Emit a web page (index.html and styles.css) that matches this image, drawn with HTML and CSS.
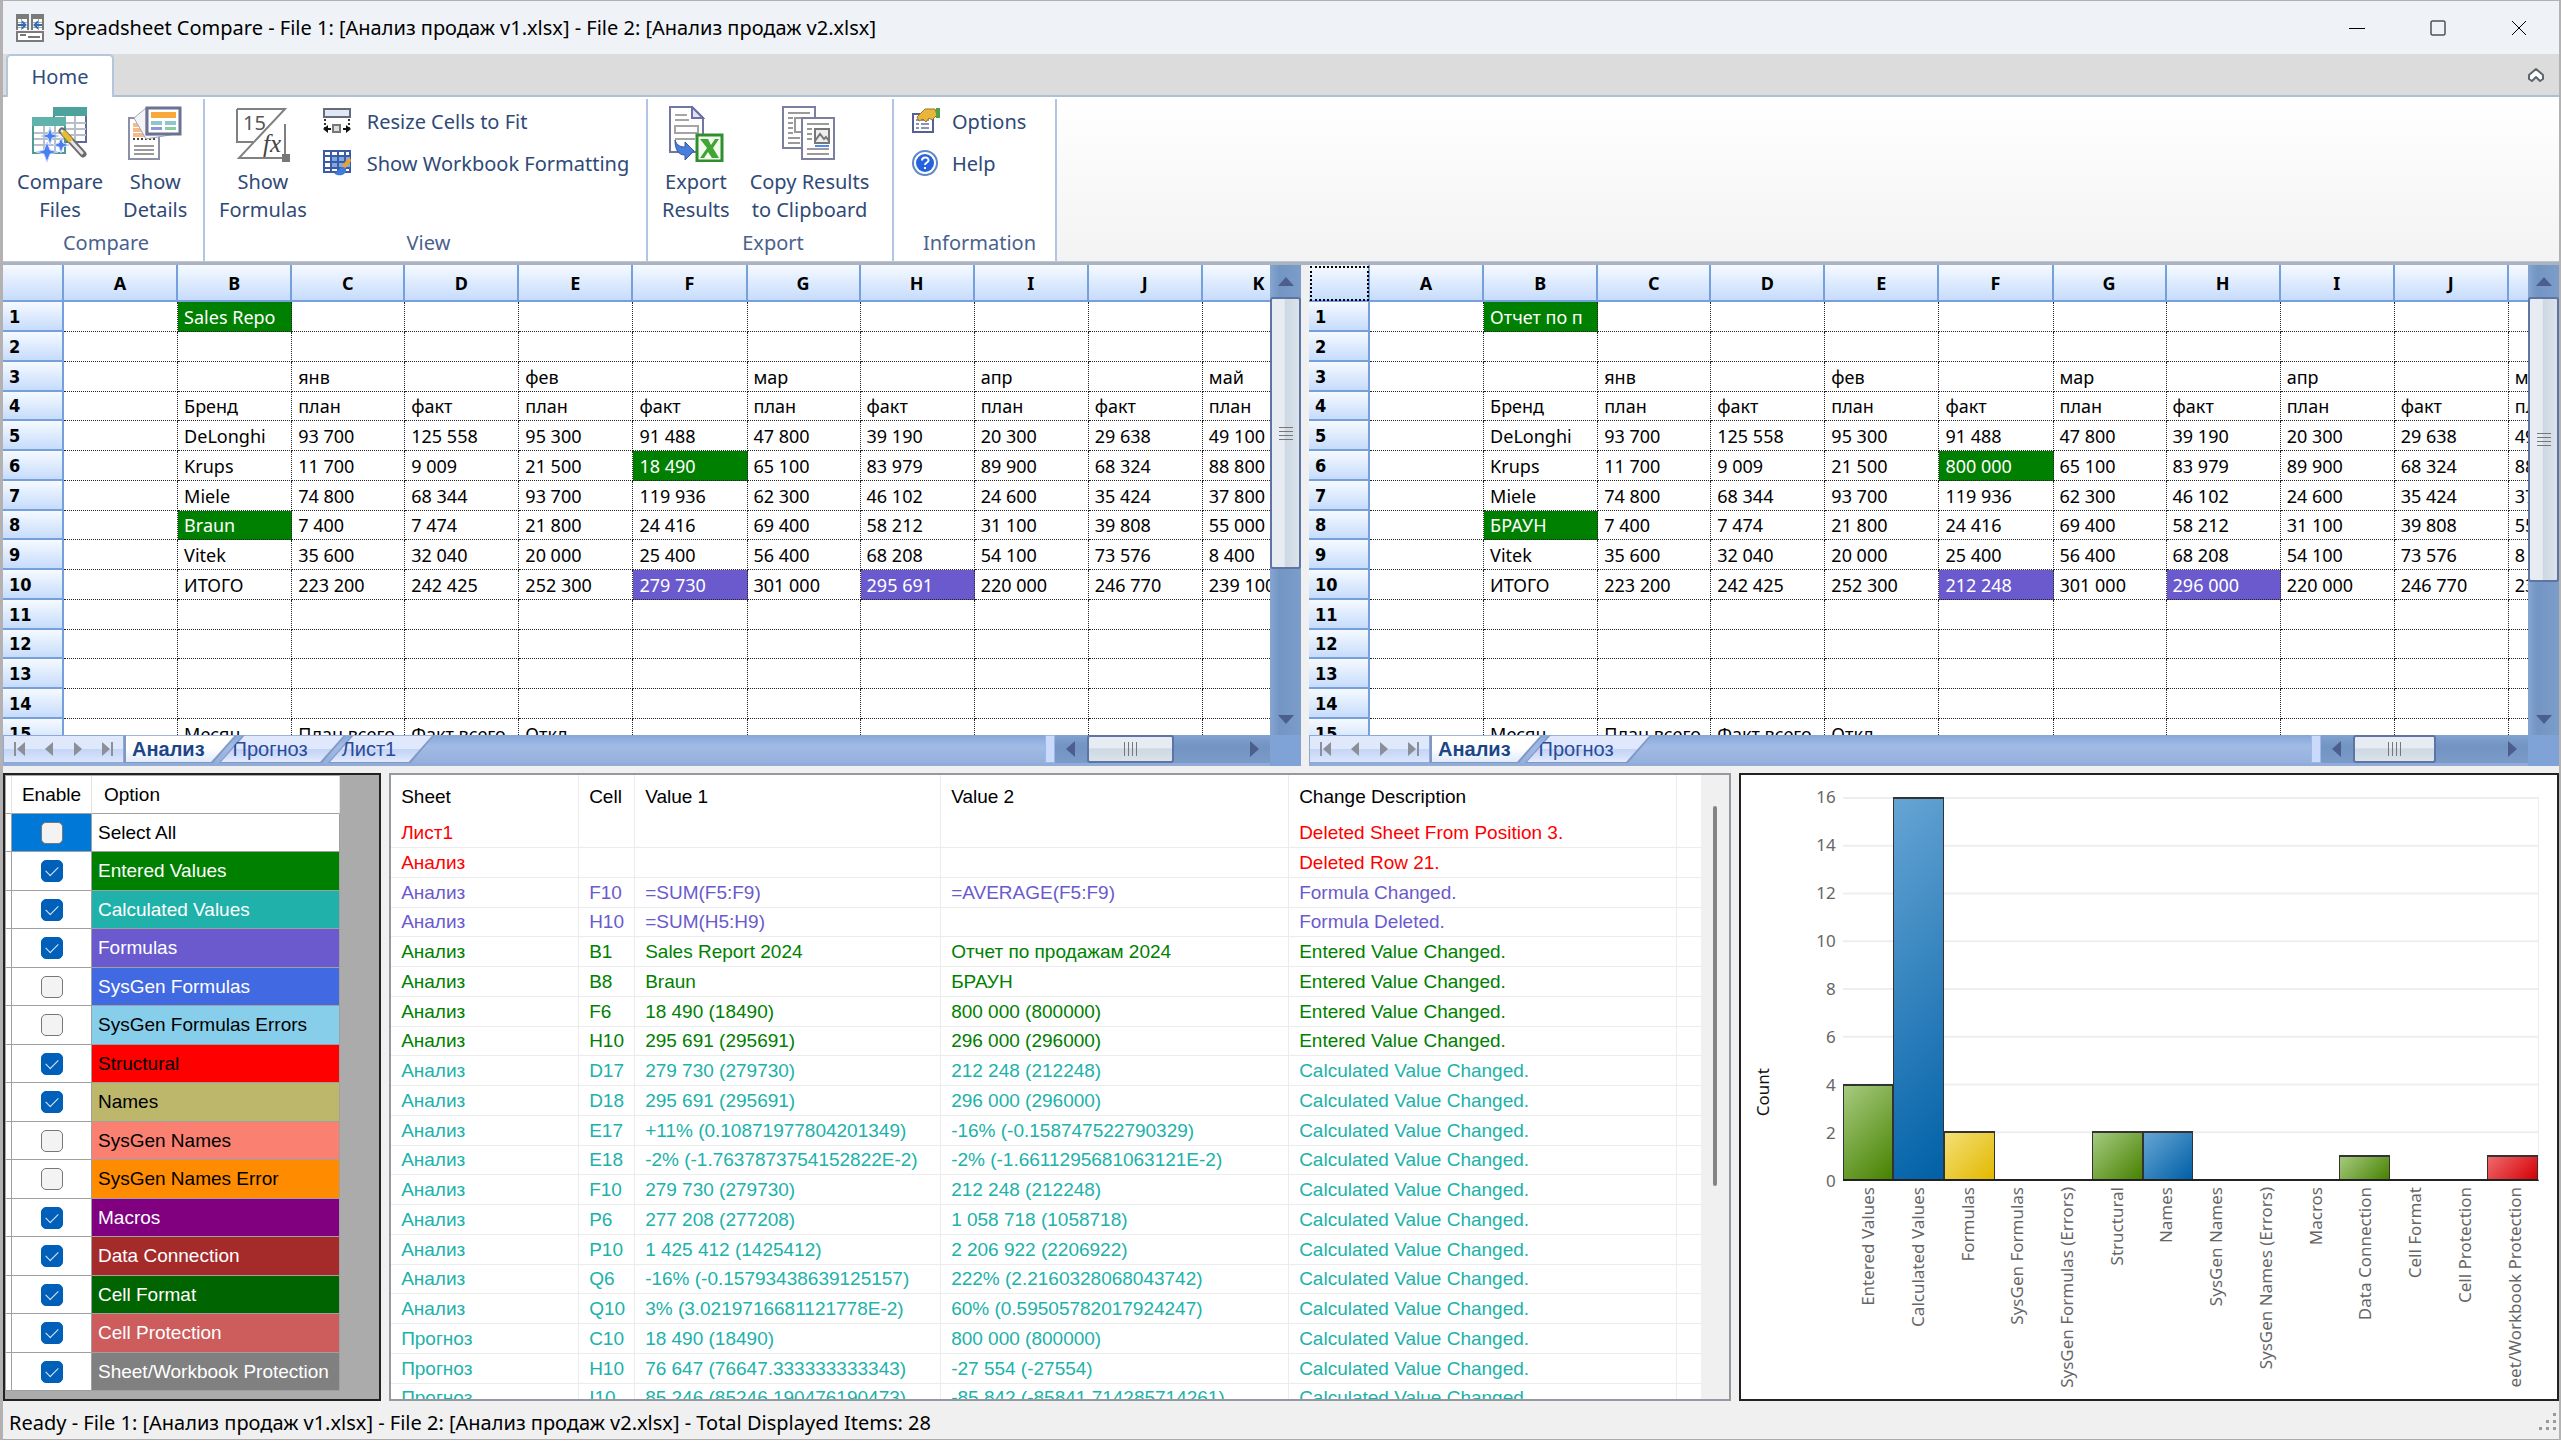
FILE: index.html
```html
<!DOCTYPE html>
<html lang="en">
<head>
  <meta charset="UTF-8">
  <title>Spreadsheet Compare</title>
  <link rel="stylesheet" href="styles.css">
</head>
<body>

<header class="titlebar">
  <svg class="app-icon" width="28" height="28" viewBox="0 0 28 28">
    <path fill="#7b7b7b" d="M0 0h13v16H0zM15 0h13v16H15zM0 17h28v11H0z"/>
    <path fill="#fff" d="M2 5h9v11H2zM17 5h9v11h-9zM2 19h24v7H2z"/>
    <path stroke="#aaa" fill="none" d="M2 8.500h9M2 13.500h9M5.500 5v11M17 8.500h9M17 13.500h9M22.500 5v11"/>
    <path stroke="#2f6eb5" stroke-width="2" fill="none" d="M2 11h7M6 7.500l3.500 3.500L6 14.500M26 11h-7M22 7.500L18.500 11l3.500 3.500"/>
    <path stroke="#777" stroke-width="2" fill="none" d="M4 21h6M12 23h12"/>
  </svg>
  <h1>Spreadsheet Compare - File 1: [Анализ продаж v1.xlsx] - File 2: [Анализ продаж v2.xlsx]</h1>
  <div class="window-buttons">
    <button aria-label="Minimize"><svg width="16" height="16" viewBox="0 0 16 16"><path d="M0 8.500h16"/></svg></button>
    <button aria-label="Maximize"><svg width="16" height="16" viewBox="0 0 16 16"><rect x="1" y="1" width="14" height="14" rx="1"/></svg></button>
    <button aria-label="Close"><svg width="16" height="16" viewBox="0 0 16 16"><path d="M1 1l14 14M15 1L1 15"/></svg></button>
  </div>
</header>

<nav class="tabstrip">
  <button class="ribbon-tab">Home</button>
  <button class="collapse" aria-label="Collapse ribbon">
    <svg width="18" height="16" viewBox="0 0 18 16"><path fill="#fff" stroke="#5c6670" stroke-width="2" stroke-linejoin="round" d="M9 2L2 8v4l3 2 4-4 4 4 3-2V8z"/></svg>
  </button>
</nav>

<section class="ribbon">
  <div class="group group-compare">
    <div class="items">
      <button class="big">
        <svg width="56" height="56" viewBox="0 0 56 56">
          <path fill="#fff" stroke="#5d6b9a" stroke-width="2" d="M22 2h32v34H22z"/>
          <path fill="#4da39b" d="M21 1h34v9H21z"/>
          <path stroke="#b9bfc9" stroke-width="2" fill="none" d="M33 10v26M43 10v26M22 17h32M22 23h32M22 29h32"/>
          <path fill="#fff" stroke="#4f9a94" stroke-width="2" d="M1 12h32v35H1z"/>
          <path fill="#5fb3aa" d="M0 11h34v9H0z"/>
          <path stroke="#b9bfc9" stroke-width="2" fill="none" d="M12 20v26M23 20v26M2 27h30M2 33h30M2 39h30"/>
          <path stroke="#6c6c6c" stroke-width="7" stroke-linecap="round" d="M30 25l21 23"/>
          <path stroke="#e6e6e6" stroke-width="3" stroke-linecap="round" d="M30 25l20 22"/>
          <path stroke="#e8be2c" stroke-width="5" d="M31 26l8 9"/>
          <path fill="#4b7ff0" stroke="#c5d8ff" d="M18 21l2 7 7 2-7 2-2 7-2-7-7-2 7-2zM29 31l2 6 6 2-6 2-2 6-2-6-6-2 6-2zM15 36l3 8 8 2-8 2-3 8-3-8-8-2 8-2z"/>
        </svg>
        <span>Compare<br>Files</span>
      </button>
      <button class="big">
        <svg width="56" height="56" viewBox="0 0 56 56">
          <path fill="#fff" stroke="#8c8fa8" stroke-width="2" d="M2 12h30v41H2z"/>
          <path fill="#f6b98a" d="M6 17h12v14H6z"/>
          <path stroke="#fff" d="M6 21.500h12M6 26.500h12"/>
          <path stroke="#9a9a9a" stroke-width="2" fill="none" d="M7 40h20M7 44h20M7 48h20"/>
          <path stroke="#444" stroke-width="2" stroke-dasharray="2 2" fill="none" d="M6 33h24M20 14v18"/>
          <path fill="#f4f4f8" stroke="#a4a4b4" d="M7 12L19 2v27l30-1-30 5z"/>
          <path fill="#fff" stroke="#6d7193" stroke-width="3" d="M20 2h33v26H20z"/>
          <path fill="#f9a83a" d="M24 6h25v6H24z"/>
          <path fill="#8fc5cf" d="M24 15h11v4H24zM38 15h11v4H38z"/>
          <path fill="#8d97dc" d="M24 21h11v3H24z"/>
          <path fill="#88cfa0" d="M38 21h11v3H38z"/>
        </svg>
        <span>Show<br>Details</span>
      </button>
    </div>
    <div class="group-name">Compare</div>
  </div>

  <div class="group group-view">
    <div class="items">
      <button class="big">
        <svg width="56" height="56" viewBox="0 0 56 56">
          <path fill="#fff" stroke="#808080" stroke-width="2" d="M2 3h48L4 52h46V18M2 3v33h16"/>
          <path fill="#777" d="M47 48h8v8h-8z"/>
          <text x="8" y="24" font-family="Noto Sans" font-size="20" fill="#555">15</text>
          <text x="28" y="46" font-family="Liberation Serif" font-style="italic" font-size="25" fill="#444">fx</text>
        </svg>
        <span>Show<br>Formulas</span>
      </button>
      <div class="stack">
        <button class="small">
          <svg width="28" height="26" viewBox="0 0 28 26">
            <path fill="#dfe8f4" stroke="#666c7a" stroke-width="2" d="M1 1h26v8H1z"/>
            <path stroke="#333" stroke-width="2" stroke-dasharray="2 2" fill="none" d="M2 11v9M26 11v9"/>
            <path fill="#ddd" stroke="#777" stroke-width="2" d="M10 17h7v7h-7z"/>
            <path fill="#111" d="M0 21l5-4v3h3v2H5v3zM28 21l-5-4v3h-3v2h3v3z"/>
          </svg>
          <span>Resize Cells to Fit</span>
        </button>
        <button class="small">
          <svg width="28" height="26" viewBox="0 0 28 26">
            <path fill="#fff" stroke="#3c5aa6" stroke-width="2" d="M1 1h26v21H1z"/>
            <path fill="#7fa9e4" d="M8 6h19v13H8z"/>
            <path stroke="#3c5aa6" stroke-width="2" fill="none" d="M8 1v21M15 1v21M22 1v21M1 6h26M1 12h26M1 18h26"/>
            <path stroke="#e5a52e" stroke-width="4" d="M27 9l-7 9"/>
            <path fill="#3d7be0" d="M21 17c-5-1-5 5-10 6 3 4 13 3 12-4z"/>
          </svg>
          <span>Show Workbook Formatting</span>
        </button>
      </div>
    </div>
    <div class="group-name">View</div>
  </div>

  <div class="group group-export">
    <div class="items">
      <button class="big">
        <svg width="56" height="56" viewBox="0 0 56 56">
          <path fill="#fff" stroke="#74779c" stroke-width="2" d="M2 1h22l11 11v34H2z"/>
          <path fill="#dfe4f2" stroke="#6b6fa6" stroke-width="2" d="M24 1v11h11z"/>
          <path stroke="#a5a5a5" stroke-width="2" fill="none" d="M7 9h12M7 14h14M7 20h23v7H7zM7 33h20"/>
          <path fill="#4a7ddc" stroke="#2f56a8" d="M7 34c2 6 6 7 10 7v-5l9 9-9 9v-5c-7 0-10-6-10-15z"/>
          <path fill="#f2faee" stroke="#2f8f2f" stroke-width="3" d="M29 29h25v26H29z"/>
          <path fill="#3fa535" d="M32 33h8l3 6 4-6h4l-6 9 6 10h-7l-4-6-4 6h-4l7-10z"/>
        </svg>
        <span>Export<br>Results</span>
      </button>
      <button class="big">
        <svg width="56" height="56" viewBox="0 0 56 56">
          <path fill="#fff" stroke="#7c7fa0" stroke-width="2" d="M2 1h32v41H2z"/>
          <path stroke="#9a9a9a" stroke-width="2" fill="none" d="M7 7h22M7 12h5M7 17h5M7 22h5M7 27h5M7 32h12M7 37h12M14 12h16v14H14z"/>
          <path fill="#fff" stroke="#7c7fa0" stroke-width="2" d="M21 12h32v41H21z"/>
          <path stroke="#9a9a9a" stroke-width="2" fill="none" d="M26 18h22M26 23h5M26 28h5M26 33h5M26 43h22M26 48h22"/>
          <path fill="#eee" stroke="#777" stroke-width="2" d="M34 23h14v14H34zM34 35l5-7 4 5 2-2 3 4"/>
          <path stroke="#4a8cf0" stroke-width="2" d="M34 40h14"/>
        </svg>
        <span>Copy Results<br>to Clipboard</span>
      </button>
    </div>
    <div class="group-name">Export</div>
  </div>

  <div class="group group-info">
    <div class="items">
      <div class="stack">
        <button class="small">
          <svg width="28" height="26" viewBox="0 0 28 26">
            <path fill="#fff" stroke="#565f96" stroke-width="2" d="M1 6h20v18H1z"/>
            <path stroke="#8a93b8" stroke-width="2" stroke-dasharray="3 2 8 9" fill="none" d="M4 12h14M4 16h14M4 20h14"/>
            <path fill="#e8b63c" stroke="#9a7420" d="M5 9l8-8h10l2 6-5 5-3-2-3 4-3-3-4 2z"/>
            <path fill="#4fa04a" d="M24 0h4v10h-4z"/>
          </svg>
          <span>Options</span>
        </button>
        <button class="small">
          <svg width="28" height="26" viewBox="0 0 28 26">
            <circle cx="13" cy="13" r="12" fill="#fff" stroke="#5f86c8" stroke-width="2"/>
            <circle cx="13" cy="13" r="9" fill="#2463dd"/>
            <path fill="none" stroke="#fff" stroke-width="2" d="M10 10.500c0-4 7-4 6.500 0 0 2-3.500 2-3.500 4.500M13 17v2"/>
          </svg>
          <span>Help</span>
        </button>
      </div>
    </div>
    <div class="group-name">Information</div>
  </div>
</section>

<main class="workspace">
  <section class="sheets">
    <div class="sheet" id="sheet1"></div>
    <div class="sheet" id="sheet2"></div>
  </section>

  <section class="results">
    <div class="options">
      <table>
        <thead><tr><th class="selector"></th><th class="enable">Enable</th><th>Option</th></tr></thead>
        <tbody id="options"></tbody>
      </table>
    </div>

    <div class="details">
      <table>
        <colgroup><col class="c-sheet"><col class="c-cell"><col class="c-v1"><col class="c-v2"><col class="c-desc"><col></colgroup>
        <thead><tr><th>Sheet</th><th>Cell</th><th>Value 1</th><th>Value 2</th><th>Change Description</th><th></th></tr></thead>
        <tbody id="details"></tbody>
      </table>
      <div class="details-scroll"><span></span></div>
    </div>

    <div class="chart">
      <div class="axis-title"><span>Count</span></div>
      <div class="y-axis">
        <span>16</span><span>14</span><span>12</span><span>10</span><span>8</span><span>6</span><span>4</span><span>2</span><span>0</span>
      </div>
      <div class="plot" id="plot"></div>
      <div class="x-axis" id="xAxis"></div>
    </div>
  </section>
</main>

<footer class="statusbar">
  <span>Ready - File 1: [Анализ продаж v1.xlsx] - File 2: [Анализ продаж v2.xlsx] - Total Displayed Items: 28</span>
  <svg width="18" height="20" viewBox="0 0 18 20"><path fill="#999" d="M14 1h3v3h-3zM14 8h3v3h-3zM7 8h3v3H7zM14 15h3v3h-3zM7 15h3v3H7zM0 15h3v3H0z"/></svg>
</footer>

<script src="app.js"></script>
</body>
</html>
```
FILE: styles.css
```css
* {
  box-sizing: border-box;
}

body {
  display: flex;
  flex-direction: column;
  height: 100vh;
  margin: 0;
  padding: 1px 2px 0 3px;
  overflow: hidden;
  background: #b3b1b1;
  font-family: "Noto Sans", "Open Sans", sans-serif;
  font-size: 18px;
  color: #000;
}

button {
  padding: 0;
  border: none;
  background: none;
  font: inherit;
  color: inherit;
}

svg {
  display: block;
  flex: none;
}

table {
  border-spacing: 0;
  table-layout: fixed;
}

/* title bar */
.titlebar {
  display: flex;
  align-items: center;
  flex: 0 0 53px;
  padding-left: 13px;
  background: #eff3f7;
}

.titlebar h1 {
  flex: 1;
  margin: 0 0 0 10px;
  font-size: 20px;
  font-weight: 400;
}

.window-buttons {
  display: flex;
}

.window-buttons button {
  display: flex;
  justify-content: center;
  width: 81px;
}

.window-buttons path,
.window-buttons rect {
  fill: none;
  stroke: #000;
}

/* ribbon */
.tabstrip {
  display: flex;
  justify-content: space-between;
  flex: 0 0 41px;
  padding: 0 14px 0 3px;
  background: #dcdcdc;
}

.ribbon-tab {
  width: 108px;
  margin-bottom: -2px;
  border: 2px solid #b3c6dc;
  border-bottom: none;
  border-radius: 5px 5px 0 0;
  background: #fff;
  font-size: 20px;
  color: #2f4c7c;
  z-index: 1;
}

.ribbon {
  display: flex;
  flex: 0 0 167px;
  border-top: 2px solid #b0c0d4;
  border-bottom: 1px solid #b9c7da;
  background: linear-gradient(#fff, #f3f3f3);
  font-size: 20px;
  color: #2f4a76;
}

.group {
  display: flex;
  flex-direction: column;
  justify-content: space-between;
  margin-top: 2px;
  padding: 7px 8px 4px 14px;
  border-right: 2px solid #b2c5e4;
  background: #fff;
}

.group-compare { width: 202px; }
.group-view { width: 443px; }
.group-export { width: 246px; }
.group-info { width: 163px; padding-left: 18px; }

.items {
  display: flex;
  align-items: flex-start;
  gap: 20px;
}

.group-view .items {
  gap: 16px;
}

.big {
  display: flex;
  flex-direction: column;
  align-items: center;
  gap: 6px;
  line-height: 28px;
}

.stack {
  display: flex;
  flex-direction: column;
  margin-top: -6px;
}

.small {
  display: flex;
  align-items: center;
  gap: 16px;
  height: 42px;
  white-space: nowrap;
}

.group-info .small {
  gap: 12px;
}

.group-name {
  text-align: center;
  line-height: 28px;
  color: #4a628c;
}

/* workspace */
.workspace {
  display: flex;
  flex-direction: column;
  flex: 1;
  gap: 7px;
  min-height: 0;
  border-top: 3px solid #adb3bd;
  background: #f0f0f0;
}

.sheets {
  display: grid;
  grid-template-columns: 1298fr 1250fr;
  grid-template-rows: minmax(0, 1fr);
  gap: 8px;
  flex: 501 1 0;
  min-height: 0;
}

.sheet {
  display: grid;
  grid-template-columns: minmax(0, 1fr) 31px;
  grid-template-rows: minmax(0, 1fr) 31px;
  min-height: 0;
}

.grid-view {
  overflow: hidden;
  background: #fff;
}

.grid-view table {
  width: 1313px;
}

.grid-view col { width: 114px; }
.grid-view col:nth-child(4n) { width: 113px; }
.grid-view col:first-child { width: 61px; }

.grid-view tr { height: 30px; }
.grid-view tbody tr:nth-child(4n) { height: 29px; }
.grid-view thead tr { height: 37px; }

.grid-view th {
  padding: 0;
  border: solid #75a0dc;
  border-width: 0 2px 2px 0;
  background: linear-gradient(#f6faff, #c6dcfc);
}

.grid-view tbody th {
  padding-left: 6px;
  text-align: left;
  font-family: "DejaVu Sans Condensed", "DejaVu Sans", sans-serif;
}

.grid-view td {
  padding: 0 0 0 6px;
  border: dotted #222;
  border-width: 0 1px 1px 0;
  line-height: 24px;
  white-space: nowrap;
  overflow: hidden;
}

#sheet2 thead th:first-child {
  outline: 2px dotted #000;
  outline-offset: -3px;
}

.grid-view .entered { background: green; color: #fff; }
.grid-view .formula { background: slateblue; color: #fff; }

.vscroll {
  display: flex;
  flex-direction: column;
  background: linear-gradient(90deg, #86a6d2, #7395c3 30%, #7c9dca);
}

.vscroll button,
.hscroll button {
  display: flex;
  align-items: center;
  justify-content: center;
  flex: 0 0 32px;
}

.track {
  display: flex;
  flex: 1;
}

.vscroll .track {
  flex-direction: column;
}

.thumb {
  display: flex;
  align-items: center;
  justify-content: center;
  border: 2px solid #5d74a4;
  border-radius: 3px;
  background: linear-gradient(90deg, #e6ecf2 45%, #cdd8e3 50%, #dbe3ea);
}

.hscroll .thumb {
  background: linear-gradient(#e6ecf2 45%, #cdd8e3 50%, #dbe3ea);
}

.sheetbar {
  display: flex;
  border-bottom: 3px solid #92acd8;
  background: linear-gradient(#86a6d8, #a1bbe6 40%, #94b0dc);
}

.sheet-nav {
  display: flex;
  justify-content: space-around;
  align-items: center;
  width: 121px;
  border: 1px solid #8ba8d8;
  background: linear-gradient(#e0e9fc 50%, #c3d4f7 50%, #dce6fb);
}

.sheet-tab {
  position: relative;
  z-index: 1;
  margin-left: -18px;
  padding: 0 38px 0 14px;
  background: #8298c4;
  clip-path: polygon(24px 0, 100% 0, calc(100% - 24px) 100%, 0 100%);
  font-family: "Liberation Sans", Arial, sans-serif;
  font-size: 20px;
  color: #2a4a98;
}

.sheet-tab::before {
  content: "";
  position: absolute;
  inset: 0 2px 1px 2px;
  z-index: -1;
  background: linear-gradient(#dfe8fc 50%, #bfd1f6 50%, #e2eafc);
  clip-path: inherit;
}

.sheet-tab.active {
  margin-left: 0;
  padding: 0 32px 0 8px;
  clip-path: polygon(0 0, 100% 0, calc(100% - 24px) 100%, 0 100%);
  font-weight: 700;
  color: #1c4688;
}

.sheet-tab.active::before {
  background: linear-gradient(#fff 50%, #dfeafb);
}

.splitter {
  width: 10px;
  margin-left: auto;
  border: 1px solid #9db7e6;
  background: #cbdafa;
}

.hscroll {
  display: flex;
  width: 17%;
  background: linear-gradient(#82a2d0, #7294c2 40%, #7b9bc8);
}

.hscroll .thumb {
  width: 58%;
}

.corner {
  background: #7fa3d6;
}

/* lower panels */
.results {
  display: grid;
  grid-template-columns: 378fr 1341fr 820fr;
  grid-template-rows: minmax(0, 1fr);
  gap: 8px;
  flex: 627 1 0;
  min-height: 0;
  font-family: "Liberation Sans", Arial, sans-serif;
  font-size: 19px;
}

.options {
  padding: 1px 0 0 1px;
  border: 2px solid #222;
  background: #ababab;
  overflow: hidden;
}

.options table {
  width: 334px;
  background: #fff;
}

.options th,
.options td {
  padding: 0;
  border: solid #a0a0a0;
  border-width: 0 1px 1px 0;
}

.options th {
  height: 38px;
  padding-left: 12px;
  border-right-color: #e5e5e5;
  text-align: left;
  font-weight: 400;
}

.options .selector {
  width: 6px;
  padding: 0;
}

.options .enable {
  width: 80px;
  padding: 0;
  text-align: center;
}

.options tbody tr { height: 38px; }
.options tbody tr:nth-child(2n) { height: 39px; }

.options tbody tr:first-child .enable {
  background: #0078d7;
}

.options label {
  display: block;
  padding-left: 6px;
  white-space: nowrap;
}

.options input {
  display: block;
  appearance: none;
  width: 22px;
  height: 22px;
  margin: 0 auto;
  border: 1px solid #777;
  border-radius: 5px;
  background: #f3f3f3;
}

.options input:checked {
  border-color: #005fb8;
  background: #005fb8;
}

.options input:checked::before {
  content: "";
  display: block;
  width: 11px;
  height: 6px;
  margin: 5px auto;
  border: solid #dce9f6;
  border-width: 0 0 1px 1px;
  transform: rotate(-45deg);
}

.details {
  display: flex;
  min-width: 0;
  border: 2px solid #9499a0;
  background: #fff;
  overflow: hidden;
}

.details table {
  flex: 1;
  align-self: flex-start;
}

.c-sheet { width: 188px; }
.c-cell { width: 56px; }
.c-v1 { width: 306px; }
.c-v2 { width: 348px; }
.c-desc { width: 388px; }

.details th,
.details td {
  padding: 0 0 0 10px;
  border-right: 1px solid #ececec;
  text-align: left;
  font-weight: 400;
  white-space: nowrap;
}

.details td {
  border-bottom: 1px solid #ececec;
  line-height: 24px;
}

.details th:last-child,
.details td:last-child {
  border-right: none;
}

.details thead tr { height: 43px; }
.details tbody tr { height: 30px; }
.details tbody tr:nth-child(4n) { height: 29px; }

.details .structural { color: red; }
.details .formulas { color: slateblue; }
.details .entered { color: green; }
.details .calculated { color: lightseagreen; }

.details-scroll {
  width: 28px;
  padding: 31px 0 0 12px;
  background: #f0f0f0;
}

.details-scroll span {
  display: block;
  width: 4px;
  height: 64%;
  border-radius: 2px;
  background: #858585;
}

/* chart */
.chart {
  display: grid;
  grid-template-columns: 44px 58px minmax(0, 1fr);
  grid-template-rows: minmax(0, 1fr) 200px;
  gap: 6px 0;
  min-width: 0;
  padding: 22px 18px 12px 0;
  border: 2px solid #222;
  background: #fff;
  font-family: "Noto Sans", sans-serif;
  font-size: 17px;
  color: #666;
}

.axis-title {
  grid-row: 1 / 3;
  display: flex;
  align-items: center;
  justify-content: center;
  color: #111;
}

.axis-title span,
.x-axis span {
  writing-mode: vertical-rl;
  transform: rotate(180deg);
  white-space: nowrap;
}

.y-axis {
  display: flex;
  flex-direction: column;
  justify-content: space-between;
  margin: -12px 0;
  padding-right: 7px;
  text-align: right;
  line-height: 24px;
}

.plot {
  display: flex;
  align-items: flex-end;
  border-right: 1px solid #eee;
  border-bottom: 2px solid #222;
  background: linear-gradient(#eee 2px, transparent 2px) 0 0 / 100% 12.5%;
}

.bar {
  flex: 1;
  border: 1px solid #333;
  border-top-width: 2px;
  border-bottom: none;
}

.bar.empty { border: none; }
.bar.green { background: linear-gradient(135deg, #a6ca7f, #478201); }
.bar.blue { background: linear-gradient(135deg, #66a5d4, #0060a7); }
.bar.yellow { background: linear-gradient(135deg, #f4df76, #e2b900); }
.bar.red { background: linear-gradient(135deg, #ee6a6d, #d50005); }

.x-axis {
  grid-column: 3;
  display: flex;
  align-items: flex-start;
  overflow: hidden;
}

.x-axis div {
  display: flex;
  justify-content: center;
  flex: 1;
}

/* status bar */
.statusbar {
  display: flex;
  align-items: center;
  justify-content: space-between;
  flex: 0 0 39px;
  padding: 4px 2px 0 6px;
  border-bottom: 1px solid #aaa;
  background: #f0f0f0;
  font-size: 20px;
}
```
FILE: app.js
```js
const COLUMNS = ['A', 'B', 'C', 'D', 'E', 'F', 'G', 'H', 'I', 'J', 'K'];

const ROWS = {
  1: ['', 'Sales Repo'],
  3: ['', '', 'янв', '', 'фев', '', 'мар', '', 'апр', '', 'май'],
  4: ['', 'Бренд', 'план', 'факт', 'план', 'факт', 'план', 'факт', 'план', 'факт', 'план'],
  5: ['', 'DeLonghi', '93 700', '125 558', '95 300', '91 488', '47 800', '39 190', '20 300', '29 638', '49 100'],
  6: ['', 'Krups', '11 700', '9 009', '21 500', '18 490', '65 100', '83 979', '89 900', '68 324', '88 800'],
  7: ['', 'Miele', '74 800', '68 344', '93 700', '119 936', '62 300', '46 102', '24 600', '35 424', '37 800'],
  8: ['', 'Braun', '7 400', '7 474', '21 800', '24 416', '69 400', '58 212', '31 100', '39 808', '55 000'],
  9: ['', 'Vitek', '35 600', '32 040', '20 000', '25 400', '56 400', '68 208', '54 100', '73 576', '8 400'],
  10: ['', 'ИТОГО', '223 200', '242 425', '252 300', '279 730', '301 000', '295 691', '220 000', '246 770', '239 100'],
  15: ['', 'Месяц', 'План всего', 'Факт всего', 'Откл.']
};

const MARKS = { B1: 'entered', F6: 'entered', B8: 'entered', F10: 'formula', H10: 'formula' };

const OPTIONS = [
  ['Select All', false, '#fff', '#000'],
  ['Entered Values', true, 'green', '#fff'],
  ['Calculated Values', true, 'lightseagreen', '#fff'],
  ['Formulas', true, 'slateblue', '#fff'],
  ['SysGen Formulas', false, 'royalblue', '#fff'],
  ['SysGen Formulas Errors', false, 'skyblue', '#000'],
  ['Structural', true, 'red', '#000'],
  ['Names', true, 'darkkhaki', '#000'],
  ['SysGen Names', false, 'salmon', '#000'],
  ['SysGen Names Error', false, 'darkorange', '#000'],
  ['Macros', true, 'purple', '#fff'],
  ['Data Connection', true, 'brown', '#fff'],
  ['Cell Format', true, 'darkgreen', '#fff'],
  ['Cell Protection', true, 'indianred', '#fff'],
  ['Sheet/Workbook Protection', true, 'gray', '#fff']
];

const CALC = 'Calculated Value Changed.';
const ENTERED = 'Entered Value Changed.';

const DETAILS = [
  ['structural', 'Лист1', '', '', '', 'Deleted Sheet From Position 3.'],
  ['structural', 'Анализ', '', '', '', 'Deleted Row 21.'],
  ['formulas', 'Анализ', 'F10', '=SUM(F5:F9)', '=AVERAGE(F5:F9)', 'Formula Changed.'],
  ['formulas', 'Анализ', 'H10', '=SUM(H5:H9)', '', 'Formula Deleted.'],
  ['entered', 'Анализ', 'B1', 'Sales Report 2024', 'Отчет по продажам 2024', ENTERED],
  ['entered', 'Анализ', 'B8', 'Braun', 'БРАУН', ENTERED],
  ['entered', 'Анализ', 'F6', '18 490 (18490)', '800 000 (800000)', ENTERED],
  ['entered', 'Анализ', 'H10', '295 691 (295691)', '296 000 (296000)', ENTERED],
  ['calculated', 'Анализ', 'D17', '279 730 (279730)', '212 248 (212248)', CALC],
  ['calculated', 'Анализ', 'D18', '295 691 (295691)', '296 000 (296000)', CALC],
  ['calculated', 'Анализ', 'E17', '+11% (0.10871977804201349)', '-16% (-0.158747522790329)', CALC],
  ['calculated', 'Анализ', 'E18', '-2% (-1.7637873754152822E-2)', '-2% (-1.6611295681063121E-2)', CALC],
  ['calculated', 'Анализ', 'F10', '279 730 (279730)', '212 248 (212248)', CALC],
  ['calculated', 'Анализ', 'P6', '277 208 (277208)', '1 058 718 (1058718)', CALC],
  ['calculated', 'Анализ', 'P10', '1 425 412 (1425412)', '2 206 922 (2206922)', CALC],
  ['calculated', 'Анализ', 'Q6', '-16% (-0.15793438639125157)', '222% (2.2160328068043742)', CALC],
  ['calculated', 'Анализ', 'Q10', '3% (3.0219716681121778E-2)', '60% (0.59505782017924247)', CALC],
  ['calculated', 'Прогноз', 'C10', '18 490 (18490)', '800 000 (800000)', CALC],
  ['calculated', 'Прогноз', 'H10', '76 647 (76647.333333333343)', '-27 554 (-27554)', CALC],
  ['calculated', 'Прогноз', 'I10', '85 246 (85246.190476190473)', '-85 842 (-85841.714285714261)', CALC]
];

const CHART = [
  ['Entered Values', 4, 'green'],
  ['Calculated Values', 16, 'blue'],
  ['Formulas', 2, 'yellow'],
  ['SysGen Formulas', 0],
  ['SysGen Formulas (Errors)', 0],
  ['Structural', 2, 'green'],
  ['Names', 2, 'blue'],
  ['SysGen Names', 0],
  ['SysGen Names (Errors)', 0],
  ['Macros', 0],
  ['Data Connection', 1, 'green'],
  ['Cell Format', 0],
  ['Cell Protection', 0],
  ['Sheet/Workbook Protection', 1, 'red']
];

function icon(w, h, d, color) {
  return `<svg width="${w}" height="${h}" viewBox="0 0 ${w} ${h}"><path fill="${color}" d="${d}"/></svg>`;
}

function cell(row, i, changes) {
  const ref = COLUMNS[i] + row;
  const value = changes[ref] || (ROWS[row] || [])[i] || '';
  const cls = MARKS[ref] ? ` class="${MARKS[ref]}"` : '';
  return `<td${cls}>${value}</td>`;
}

function renderSheet(id, tabs, changes, thumb) {
  let rows = '';
  for (let r = 1; r <= 15; r++) {
    rows += `<tr><th>${r}</th>${COLUMNS.map((c, i) => cell(r, i, changes)).join('')}</tr>`;
  }
  const dark = '#4c5f8c';
  const gray = '#8a8f98';
  document.getElementById(id).innerHTML = `
    <div class="grid-view">
      <table>
        <colgroup><col>${'<col>'.repeat(COLUMNS.length)}</colgroup>
        <thead><tr><th></th>${COLUMNS.map(c => `<th>${c}</th>`).join('')}</tr></thead>
        <tbody>${rows}</tbody>
      </table>
    </div>
    <div class="vscroll">
      <button aria-label="Scroll up">${icon(16, 9, 'M8 0l8 9H0z', dark)}</button>
      <div class="track"><div class="thumb" style="height: ${thumb}%">${icon(14, 13, 'M0 0h14v1H0zM0 4h14v1H0zM0 8h14v1H0zM0 12h14v1H0z', '#777')}</div></div>
      <button aria-label="Scroll down">${icon(16, 9, 'M0 0h16l-8 9z', dark)}</button>
    </div>
    <div class="sheetbar">
      <div class="sheet-nav">
        <button aria-label="First sheet">${icon(11, 14, 'M0 0h2v14H0zM11 0v14L3 7z', gray)}</button>
        <button aria-label="Previous sheet">${icon(8, 14, 'M8 0v14L0 7z', gray)}</button>
        <button aria-label="Next sheet">${icon(8, 14, 'M0 0v14l8-7z', gray)}</button>
        <button aria-label="Last sheet">${icon(11, 14, 'M9 0h2v14H9zM0 0v14l8-7z', gray)}</button>
      </div>
      ${tabs.map((t, i) => `<button class="sheet-tab${i ? '' : ' active'}">${t}</button>`).join('')}
      <div class="splitter"></div>
      <div class="hscroll">
        <button aria-label="Scroll left">${icon(9, 16, 'M9 0v16L0 8z', dark)}</button>
        <div class="track"><div class="thumb">${icon(13, 14, 'M0 0h1v14H0zM4 0h1v14H4zM8 0h1v14H8zM12 0h1v14h-1z', '#777')}</div></div>
        <button aria-label="Scroll right">${icon(9, 16, 'M0 0v16l9-8z', dark)}</button>
      </div>
    </div>
    <div class="corner"></div>`;
}

renderSheet('sheet1', ['Анализ', 'Прогноз', 'Лист1'], {}, 67);
renderSheet('sheet2', ['Анализ', 'Прогноз'], {
  B1: 'Отчет по п', F6: '800 000', B8: 'БРАУН', F10: '212 248', H10: '296 000'
}, 70);

document.getElementById('options').innerHTML = OPTIONS.map(([name, on, bg, fg], i) => `
  <tr>
    <td></td>
    <td class="enable"><input type="checkbox" id="opt${i}"${on ? ' checked' : ''}></td>
    <td style="background: ${bg}; color: ${fg}"><label for="opt${i}">${name}</label></td>
  </tr>`).join('');

document.getElementById('details').innerHTML = DETAILS.map(([cls, ...cells]) =>
  `<tr class="${cls}">${cells.map(c => `<td>${c}</td>`).join('')}<td></td></tr>`).join('');

document.getElementById('plot').innerHTML = CHART.map(([, n, color]) =>
  `<div class="bar ${n ? color : 'empty'}" style="height: ${n / 16 * 100}%"></div>`).join('');

document.getElementById('xAxis').innerHTML = CHART.map(([name]) =>
  `<div><span>${name}</span></div>`).join('');
```
